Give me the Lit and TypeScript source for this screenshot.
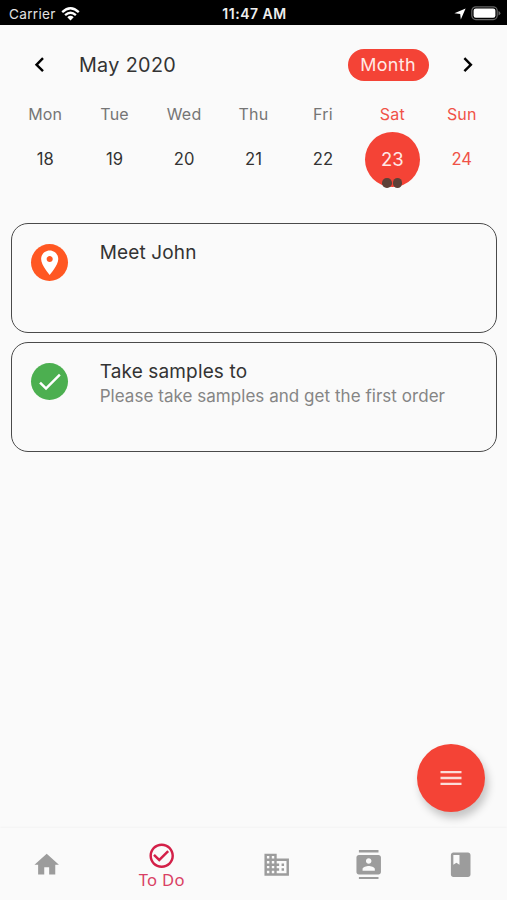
import { LitElement, html, css, svg } from "lit";
import { customElement, property } from "lit/decorators.js";

const icons: Record<string, string> = {
  left: "M15.41 7.41L14 6l-6 6 6 6 1.41-1.41L10.83 12z",
  right: "M10 6L8.59 7.41 13.17 12l-4.58 4.59L10 18l6-6z",
  place: "M12 2C8.13 2 5 5.13 5 9c0 5.25 7 13 7 13s7-7.75 7-13c0-3.87-3.13-7-7-7zm0 9.5c-1.38 0-2.5-1.12-2.5-2.5s1.12-2.5 2.5-2.5 2.5 1.12 2.5 2.5-1.12 2.5-2.5 2.5z",
  check: "M9 16.17L4.83 12l-1.42 1.41L9 19 21 7l-1.41-1.41z",
  menu: "M3 18h18v-2H3v2zm0-5h18v-2H3v2zm0-7v2h18V6H3z",
  home: "M10 20v-6h4v6h5v-8h3L12 3 2 12h3v8z",
  todo: "M16.59 7.58L10 14.17l-3.59-3.58L5 12l5 5 8-8zM12 2C6.48 2 2 6.48 2 12s4.48 10 10 10 10-4.48 10-10S17.52 2 12 2zm0 18c-4.42 0-8-3.58-8-8s3.58-8 8-8 8 3.58 8 8-3.58 8-8 8z",
  business: "M12 7V3H2v18h20V7H12zM6 19H4v-2h2v2zm0-4H4v-2h2v2zm0-4H4V9h2v2zm0-4H4V5h2v2zm4 12H8v-2h2v2zm0-4H8v-2h2v2zm0-4H8V9h2v2zm0-4H8V5h2v2zm10 12h-8v-2h2v-2h-2v-2h2v-2h-2V9h8v10zm-2-8h-2v2h2v-2zm0 4h-2v2h2v-2z",
  contacts: "M20 0H4v2h16V0zM4 24h16v-2H4v2zM20 4H4c-1.1 0-2 .9-2 2v12c0 1.1.9 2 2 2h16c1.1 0 2-.9 2-2V6c0-1.1-.9-2-2-2zm-8 2.75c1.24 0 2.25 1.01 2.25 2.25s-1.01 2.25-2.25 2.25S9.75 10.24 9.75 9 10.76 6.75 12 6.75zM17 17H7v-1.5c0-1.67 3.33-2.5 5-2.5s5 .83 5 2.5V17z",
  book: "M18 2H6c-1.1 0-2 .9-2 2v16c0 1.1.9 2 2 2h12c1.1 0 2-.9 2-2V4c0-1.1-.9-2-2-2zM6 4h5v8l-2.5-1.5L6 12V4z",
};

@customElement("md-icon")
class MdIcon extends LitElement {
  @property() name = "";
  static styles = css`
    :host { display: block; width: 29.4px; height: 29.4px; flex: none; }
    .glyph { display: block; width: 100%; height: 100%; fill: currentColor; }
  `;
  render() {
    return html`<svg class="glyph" viewBox="0 0 24 24">${svg`<path d=${icons[this.name]}></path>`}</svg>`;
  }
}

const days = [
  { name: "Mon", date: 18 },
  { name: "Tue", date: 19 },
  { name: "Wed", date: 20 },
  { name: "Thu", date: 21 },
  { name: "Fri", date: 22 },
  { name: "Sat", date: 23, weekend: true, selected: true },
  { name: "Sun", date: 24, weekend: true },
];

const tasks = [
  { icon: "place", title: "Meet John", note: "" },
  { icon: "check", title: "Take samples to", note: "Please take samples and get the first order" },
];

const tabs = [
  { icon: "home" },
  { icon: "todo", label: "To Do" },
  { icon: "business" },
  { icon: "contacts" },
  { icon: "book" },
];

@customElement("app-root")
class AppRoot extends LitElement {
  static styles = css`
    :host {
      display: flex; flex-direction: column; position: relative; box-sizing: border-box;
      height: 900px; overflow: hidden; background: #fafafa; color: #333;
      font-family: Inter, "Liberation Sans", sans-serif;
    }
    .status {
      display: grid; grid-template-columns: 1fr auto 1fr; align-items: center; flex: none;
      height: 25px; padding: 2px 6px 0 9px; box-sizing: border-box; background: #000; color: #fff;
      font-size: 13.6px; line-height: 20px;
    }
    .carrier { display: flex; align-items: center; gap: 5.5px; color: #e2e2e2; letter-spacing: 0.3px; }
    .clock { font-weight: 600; font-size: 14px; letter-spacing: 0.5px; color: #eee; margin-left: -1px; }
    .power { display: flex; align-items: center; justify-content: flex-end; gap: 5px; }
    .wifi, .arrow, .battery { display: block; }
    .header { display: flex; align-items: center; height: 79px; padding: 0 24.5px 0 25px; flex: none; }
    .chevron { color: #000; }
    .month { flex: 1; margin-left: 24.5px; font-size: 19.8px; letter-spacing: 0.35px; }
    .pill {
      width: 81px; height: 32px; border-radius: 16px; background: #f44336; color: #ffe9e6;
      display: flex; align-items: center; justify-content: center; font-size: 17.9px; letter-spacing: 0.35px;
      margin-right: 24.5px;
    }
    .week { display: grid; grid-template-columns: repeat(7, 1fr); padding: 0 10.5px; flex: none; height: 119px; }
    .day { display: flex; flex-direction: column; align-items: center; }
    .name { font-size: 16px; line-height: 20px; letter-spacing: 0.2px; color: #757575; }
    .date {
      position: relative; width: 55px; height: 55px; margin-top: 7.5px; border-radius: 50%;
      display: flex; align-items: center; justify-content: center; font-size: 16.6px; line-height: 20px; color: #333;
    }
    .weekend .name, .weekend .date { color: #f05247; }
    .selected .date { background: #f44336; color: #ffe9e6; font-size: 18.4px; }
    .dots { position: absolute; left: 0; right: 0; bottom: -1px; display: flex; justify-content: center; gap: 1px; }
    .dot { width: 9.6px; height: 9.6px; border-radius: 50%; background: #5d4037; }
    .tasks { display: flex; flex-direction: column; gap: 9px; padding: 0 10px 0 10.5px; flex: 1; }
    .task {
      display: flex; height: 110px; box-sizing: border-box; border: 1.3px solid #4a4a4a; border-radius: 17px;
      padding: 20px 19px 0 19.4px;
    }
    .badge {
      width: 37px; height: 37px; border-radius: 50%; flex: none; color: #fff;
      display: flex; align-items: center; justify-content: center;
    }
    .place { background: #ff5722; }
    .check { background: #4caf50; }
    .body { margin: -4.5px 0 0 31.8px; }
    .title { font-size: 19px; line-height: 26px; letter-spacing: 0.14px; color: #333; }
    .note { font-size: 17px; line-height: 23px; letter-spacing: 0.04px; color: #858585; white-space: nowrap; }
    .fab {
      position: absolute; left: 416.5px; top: 743.5px; width: 68.5px; height: 68.5px; border-radius: 50%;
      background: #f44336; color: #fbdcd8; display: flex; align-items: center; justify-content: center;
      box-shadow: 3px 6px 9px rgba(0, 0, 0, 0.22);
    }
    .menu { width: 28px; height: 28px; }
    .tabs {
      display: flex; flex: none; height: 72px; box-sizing: border-box; background: #fafafa; padding: 1.5px 0 0 0.6px;
      box-shadow: 0 -1px 2px rgba(0, 0, 0, 0.03);
    }
    .tab {
      flex: 2 1 0; display: flex; flex-direction: column; align-items: center; justify-content: center; color: #9c9c9c;
    }
    .active { flex-grow: 3; color: #d32048; padding-top: 1.5px; }
    .label { font-family: "Noto Sans", sans-serif; font-size: 16.6px; line-height: 20px; letter-spacing: 0.3px; color: #d93f64; }
  `;

  render() {
    return html`
      <div class="status">
        <div class="carrier">
          <span>Carrier</span>
          <svg class="wifi" width="19" height="14" viewBox="0 0 19 14">
            <g fill="none" stroke="#fff" stroke-width="2.3">
              <path d="M1.2 5.2Q9.5 -2.6 17.8 5.2"></path>
              <path d="M4.1 8.2Q9.5 3.2 14.9 8.2"></path>
            </g>
            <path fill="#fff" d="M6.3 10.2Q9.5 7.4 12.7 10.2L9.5 13.5z"></path>
          </svg>
        </div>
        <div class="clock">11:47 AM</div>
        <div class="power">
          <svg class="arrow" width="12" height="12" viewBox="0 0 12 12"><path fill="#fff" d="M11.6 0.4L6.8 11.5 6.2 6 0.4 5.3z"></path></svg>
          <svg class="battery" width="30" height="15" viewBox="0 0 30 15">
            <rect x="0.8" y="0.8" width="25.4" height="12.8" rx="4" fill="none" stroke="#666" stroke-width="1.2"></rect>
            <rect x="2.6" y="2.6" width="21.8" height="9.2" rx="2.2" fill="#fff"></rect>
            <path fill="#666" d="M27.5 5q1.9 0.7 1.9 2.2t-1.9 2.2z"></path>
          </svg>
        </div>
      </div>
      <div class="header">
        <md-icon class="chevron" name="left"></md-icon>
        <div class="month">May 2020</div>
        <div class="pill">Month</div>
        <md-icon class="chevron" name="right"></md-icon>
      </div>
      <div class="week">
        ${days.map((d) => html`
          <div class="day ${d.weekend ? "weekend" : ""} ${d.selected ? "selected" : ""}">
            <div class="name">${d.name}</div>
            <div class="date">
              ${d.date}
              ${d.selected ? html`<div class="dots"><span class="dot"></span><span class="dot"></span></div>` : ""}
            </div>
          </div>`)}
      </div>
      <div class="tasks">
        ${tasks.map((t) => html`
          <div class="task">
            <div class="badge ${t.icon}"><md-icon name=${t.icon}></md-icon></div>
            <div class="body">
              <div class="title">${t.title}</div>
              <div class="note">${t.note}</div>
            </div>
          </div>`)}
      </div>
      <div class="tabs">
        ${tabs.map((t) => html`
          <div class="tab ${t.label ? "active" : ""}">
            <md-icon name=${t.icon}></md-icon>
            ${t.label ? html`<div class="label">${t.label}</div>` : ""}
          </div>`)}
      </div>
      <div class="fab"><md-icon class="menu" name="menu"></md-icon></div>
    `;
  }
}
